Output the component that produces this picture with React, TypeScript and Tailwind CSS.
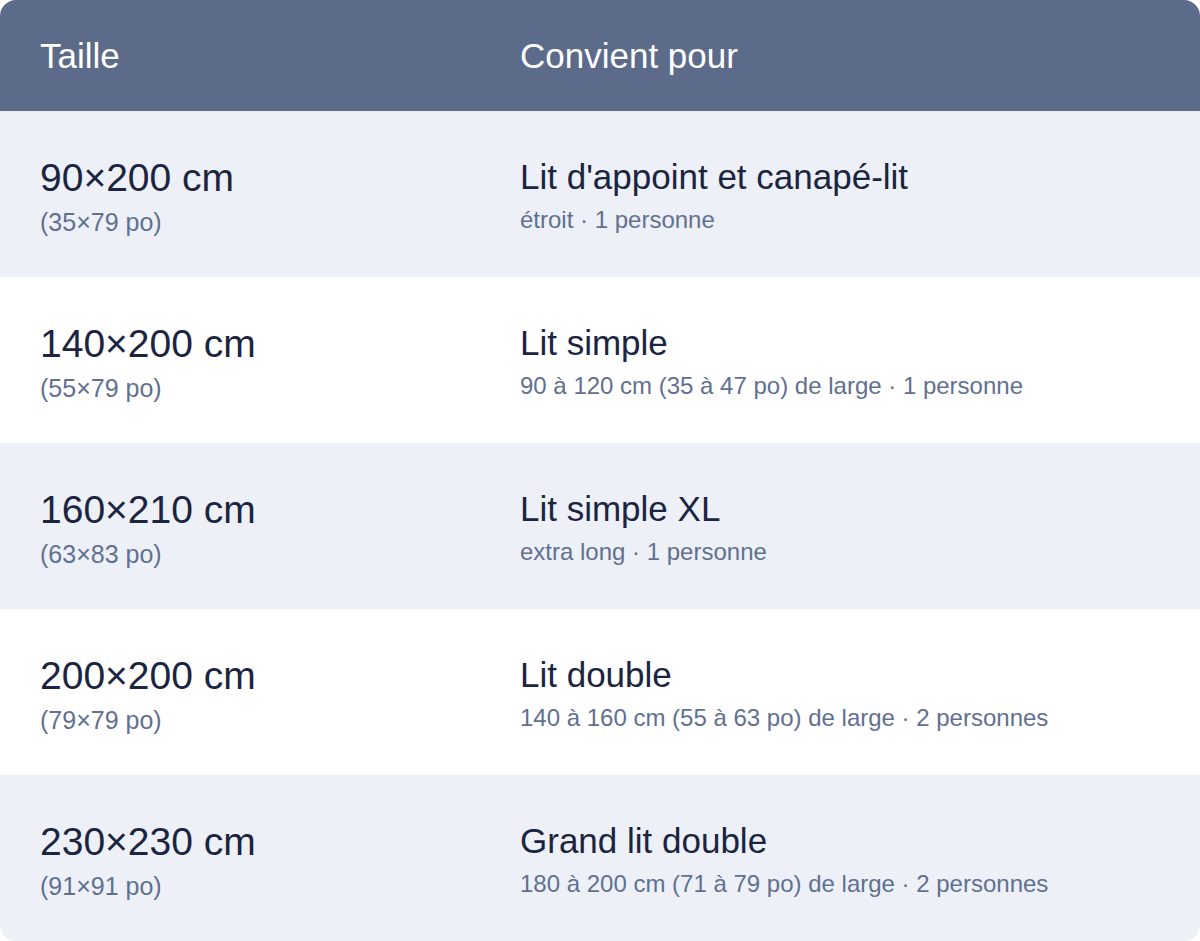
const rows = [
  { size: "90×200 cm", inch: "(35×79 po)", title: "Lit d'appoint et canapé-lit", note: "étroit · 1 personne" },
  { size: "140×200 cm", inch: "(55×79 po)", title: "Lit simple", note: "90 à 120 cm (35 à 47 po) de large · 1 personne" },
  { size: "160×210 cm", inch: "(63×83 po)", title: "Lit simple XL", note: "extra long · 1 personne" },
  { size: "200×200 cm", inch: "(79×79 po)", title: "Lit double", note: "140 à 160 cm (55 à 63 po) de large · 2 personnes" },
  { size: "230×230 cm", inch: "(91×91 po)", title: "Grand lit double", note: "180 à 200 cm (71 à 79 po) de large · 2 personnes" },
];

export default function App() {
  return (
    <div className="w-[1200px] h-[941px] bg-white font-['Liberation_Sans',Arial,sans-serif]">
      <div className="rounded-2xl overflow-hidden">
        {/* header */}
        <div className="grid grid-cols-[480px_1fr] items-center h-[111px] px-10 bg-[#5c6b89] text-white text-[35px] leading-none">
          <div>Taille</div>
          <div>Convient pour</div>
        </div>

        {rows.map((r, i) => (
          <div
            key={r.size}
            className={`grid grid-cols-[480px_1fr] items-center h-[166px] px-10 ${i % 2 === 0 ? "bg-[#edf0f7]" : "bg-white"}`}
          >
            <div className="pt-[5px]">
              <div className="text-[39px] leading-[44px] text-[#1b2440]">{r.size}</div>
              <div className="mt-[6px] text-[25px] leading-[32px] text-[#617090]">{r.inch}</div>
            </div>
            <div className="pt-[3px]">
              <div className="text-[35px] leading-[44px] text-[#1b2440]">{r.title}</div>
              <div className="mt-[5px] text-[24px] leading-[32px] text-[#617090]">{r.note}</div>
            </div>
          </div>
        ))}
      </div>
    </div>
  );
}
